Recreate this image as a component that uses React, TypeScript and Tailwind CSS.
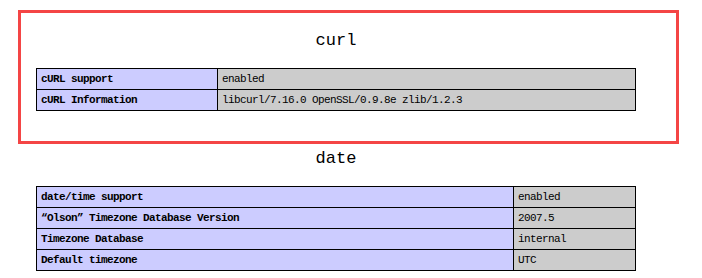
const curl: [string, string][] = [
  ["cURL support", "enabled"],
  ["cURL Information", "libcurl/7.16.0 OpenSSL/0.9.8e zlib/1.2.3"],
];

const date: [string, string][] = [
  ["date/time support", "enabled"],
  ["\u201cOlson\u201d Timezone Database Version", "2007.5"],
  ["Timezone Database", "internal"],
  ["Default timezone", "UTC"],
];

function InfoTable({ rows, labelWidth }: { rows: [string, string][]; labelWidth: string }) {
  return (
    <table className="w-[600px] border-collapse text-[11px] tracking-[-0.6px] text-black">
      <tbody>
        {rows.map(([k, v]) => (
          <tr key={k} className="h-[21px]">
            <td className={`${labelWidth} border border-black bg-[#ccccff] px-[4px] py-0 font-bold leading-[20px]`}>{k}</td>
            <td className="border border-black bg-[#cccccc] px-[4px] py-0 leading-[20px]">{v}</td>
          </tr>
        ))}
      </tbody>
    </table>
  );
}

export default function App() {
  return (
    <div className="relative h-[278px] w-[702px] bg-white font-['Liberation_Mono',monospace]">
      <div className="ml-[36px] w-[600px] pt-[30px]">
        <h2 className="mb-[16px] h-[22px] text-center text-[17px] leading-[22px] text-black">curl</h2>
        <InfoTable rows={curl} labelWidth="w-[181px]" />
        <h2 className="mt-[37px] mb-[16px] h-[22px] text-center text-[17px] leading-[22px] text-black">date</h2>
        <InfoTable rows={date} labelWidth="w-[477px]" />
      </div>

      {/* annotation frame drawn over the curl section */}
      <div className="pointer-events-none absolute left-[18px] top-[10px] h-[134px] w-[661px] border-[3px] border-[#f44545]" />
    </div>
  );
}
